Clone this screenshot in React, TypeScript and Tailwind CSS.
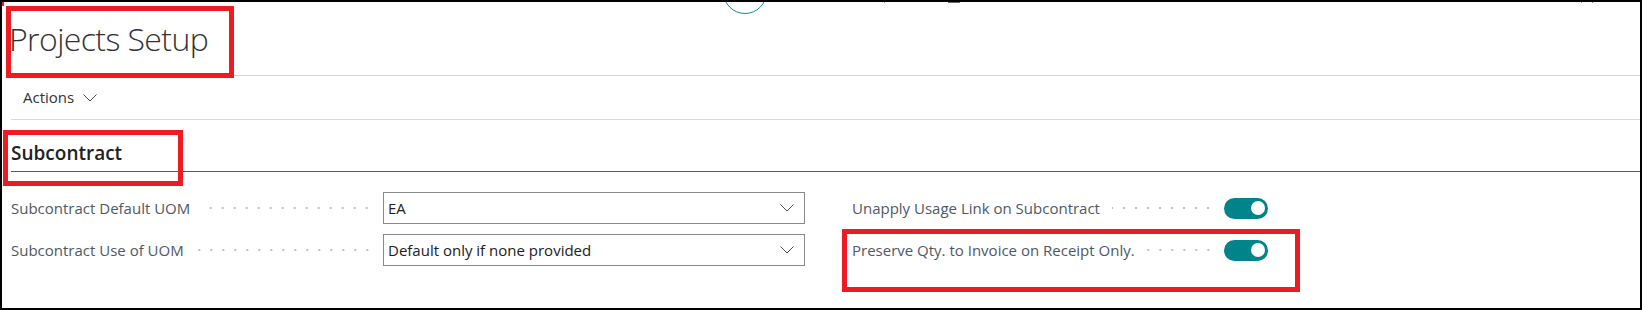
import React from "react";

const dots =
  "flex-1 h-[4px] bg-[radial-gradient(circle,#c2c2c2_1px,transparent_1.6px)] bg-[length:12px_4px] bg-repeat-x bg-right";

function Chevron({ className }: { className?: string }) {
  return (
    <svg width="14" height="8" viewBox="0 0 14 8" className={className}>
      <polyline
        points="0.5,0.5 7,7 13.5,0.5"
        fill="none"
        stroke="#505050"
        strokeWidth="1"
      />
    </svg>
  );
}

function SelectField({ label, value }: { label: string; value: string }) {
  return (
    <div className="flex items-center h-[32px]">
      <span className="whitespace-nowrap text-[15px] text-[#4e5965]">{label}</span>
      <div className={dots + " ml-[11px] mr-[10px]"}></div>
      <div className="w-[422px] h-[32px] border border-[#8a8a8a] flex items-center justify-between pl-[4px] pr-[10px]">
        <span className="text-[15px] text-[#212121]">{value}</span>
        <Chevron />
      </div>
    </div>
  );
}

function ToggleField({ label }: { label: string }) {
  return (
    <div className="flex items-center h-[32px]">
      <span className="whitespace-nowrap text-[15px] text-[#4e5965]">{label}</span>
      <div className={dots + " ml-[12px] mr-[10px]"}></div>
      <div className="w-[44px] h-[21px] rounded-full bg-[#00838a] flex items-center justify-end pr-[3px]">
        <div className="w-[14px] h-[14px] rounded-full bg-white"></div>
      </div>
    </div>
  );
}

export default function App() {
  return (
    <div className="relative w-[1642px] h-[310px] border-2 border-black bg-white overflow-hidden font-['Open_Sans',sans-serif]">
      {/* cut-off header bits */}
      <div className="flex items-start h-[12px] overflow-hidden">
        <div className="ml-[721px] mt-[-32px] w-[44px] h-[44px] rounded-full border-[1.5px] border-[#1b8c92] shrink-0"></div>
        <div className="ml-[117px] w-[1px] h-[1px] bg-[#9a9a9a]"></div>
        <div className="ml-[63px] w-[12px] h-[1px] bg-[#6a6a6a]"></div>
        <div className="ml-[621px] w-[1px] h-[1px] bg-[#5aa9a9]"></div>
        <div className="ml-[10px] w-[1px] h-[1px] bg-[#5aa9a9]"></div>
      </div>

      <div className="pl-[9px]">
        <div className="h-[62px] border-b border-[#d4d4d4] pt-[3px]">
          <h1 className="-ml-[2px] text-[32px] leading-[44px] font-light tracking-[-0.6px] text-[#333333]">
            Projects Setup
          </h1>
        </div>

        <div className="h-[44px] border-b border-[#dadada] flex items-center pl-[12px] gap-[9px]">
          <span className="text-[15px] text-[#333333]">Actions</span>
          <Chevron className="mt-[1px]" />
        </div>

        <div className="h-[52px] border-b border-[#505c6d] pt-[20px]">
          <h2 className="text-[19px] leading-[26px] font-semibold text-[#212121]">Subcontract</h2>
        </div>

        <div className="flex gap-[47px] pt-[20px]">
          <div className="w-[794px] flex flex-col gap-[10px]">
            <SelectField label="Subcontract Default UOM" value="EA" />
            <SelectField label="Subcontract Use of UOM" value="Default only if none provided" />
          </div>
          <div className="w-[416px] flex flex-col gap-[10px]">
            <ToggleField label="Unapply Usage Link on Subcontract" />
            <ToggleField label="Preserve Qty. to Invoice on Receipt Only." />
          </div>
        </div>
      </div>

      {/* annotation boxes */}
      <div className="absolute left-[-1px] top-[-2px] w-[3px] h-[6px] bg-[#ed1c24]"></div>
      <div className="absolute left-[4px] top-[4px] w-[228px] h-[72px] border-[5px] border-[#ed1c24]"></div>
      <div className="absolute left-[1px] top-[128px] w-[180px] h-[56px] border-[5px] border-[#ed1c24]"></div>
      <div className="absolute left-[840px] top-[227px] w-[458px] h-[63px] border-[5px] border-[#ed1c24]"></div>
    </div>
  );
}
